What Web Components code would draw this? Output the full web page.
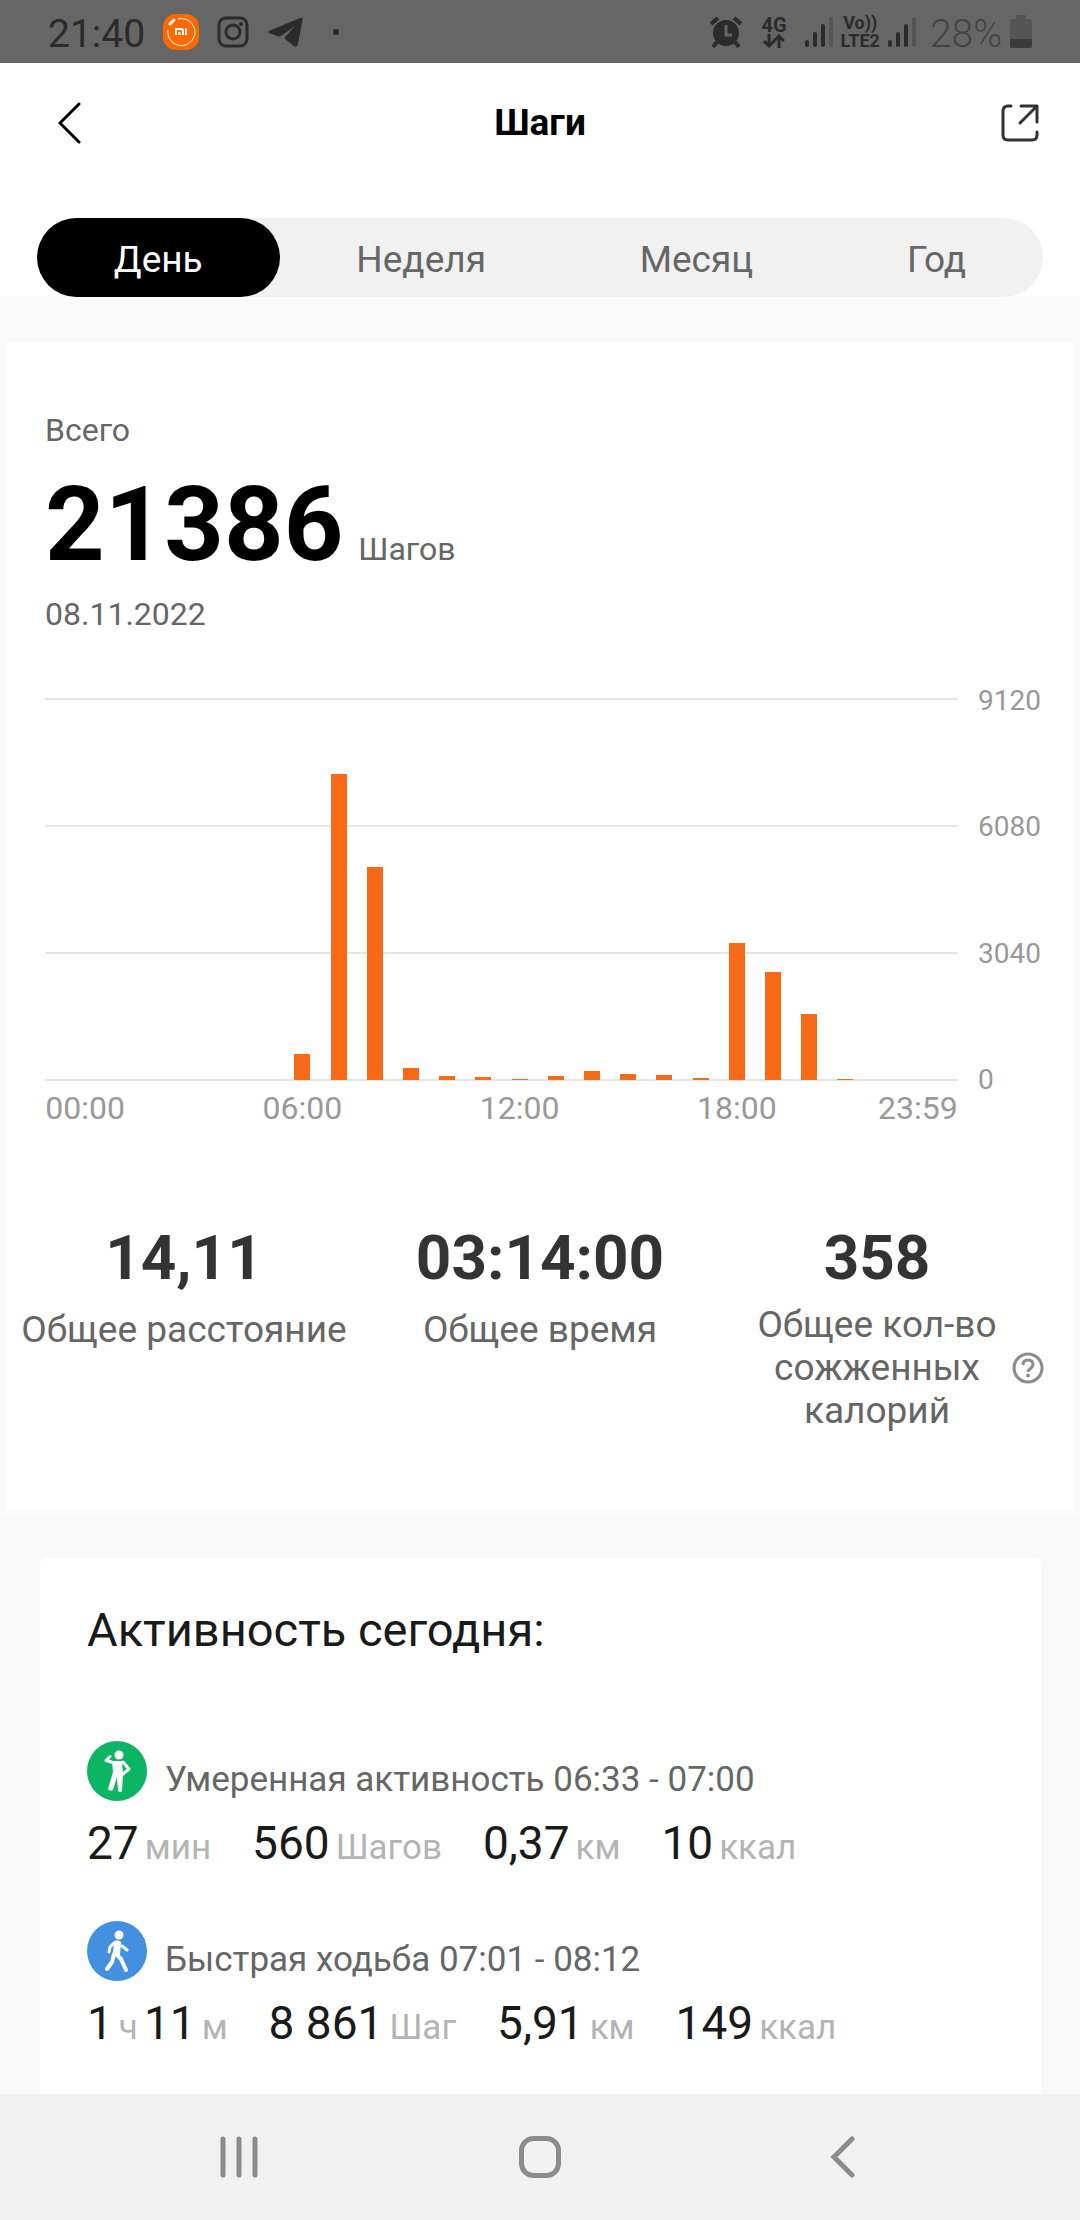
<!DOCTYPE html>
<html lang="ru">
<head>
<meta charset="utf-8">
<meta name="viewport" content="width=device-width, initial-scale=1">
<title>Шаги</title>
<style>
  body {
    margin: 0;
    font-family: Roboto, "Noto Sans", sans-serif;
    background: #f8f8f8;
    color: #666;
  }
</style>
</head>
<body>
<steps-app></steps-app>

<script>
class StatusBar extends HTMLElement {
  constructor () {
    super()
    this.shadow = this.attachShadow({ mode: 'open' })
  }

  connectedCallback () {
    this.render()
  }

  signal () {
    return /* html */`
      <svg width="28" height="32" viewBox="0 0 28 32" stroke-width="4" stroke-linecap="round">
        <path d="M2 26v3M10 18v11M18 10v19" stroke="#2b2b2b"/>
        <path d="M26 3v26" stroke="#555"/>
      </svg>`
  }

  render () {
    this.shadow.innerHTML =
      /* html */`
      <style>
        :host {
          display: flex;
          justify-content: space-between;
          align-items: center;
          height: 63px;
          padding: 0 48px;
          background: #666;
          color: #2b2b2b;
          font-size: 39px;
          line-height: 57px;
        }

        .group {
          display: flex;
          align-items: center;
        }

        .left {
          gap: 18px;
        }

        .right {
          gap: 8px;
        }

        .time {
          padding-top: 6px;
        }

        .dot {
          width: 6px;
          height: 6px;
          margin-left: 12px;
          border-radius: 50%;
          background: #2b2b2b;
        }

        .network {
          display: grid;
          justify-items: center;
          font-size: 18px;
          font-weight: 700;
          line-height: 18px;
        }

        .mobile {
          margin: 0 10px;
          font-size: 20px;
        }

        .battery {
          padding: 6px 0 0 6px;
          color: #444;
          font-weight: 300;
        }

        svg {
          display: block;
        }
      </style>

      <div class="group left">
        <span class="time">21:40</span>
        <svg width="36" height="36" viewBox="0 0 36 36" fill="none">
          <rect width="36" height="36" rx="13" fill="#ff6900"/>
          <path d="M15 5a13.500 13.500 0 1 1-10 11" stroke="#fff" stroke-width="1"/>
          <path d="M7 10l4-4" stroke="#fff" stroke-width="3" stroke-linecap="round"/>
          <path d="M13 21v-6h5q2 0 2 2v4M16.500 21v-3M23 14.500v6.500" stroke="#fff" stroke-width="2"/>
        </svg>
        <svg width="32" height="32" viewBox="0 0 32 32" fill="none" stroke="#2b2b2b" stroke-width="3">
          <rect x="2" y="2" width="28" height="28" rx="7"/>
          <circle cx="16" cy="16" r="7"/>
          <circle cx="24" cy="8" r="2" fill="#2b2b2b" stroke="none"/>
        </svg>
        <svg width="36" height="32" viewBox="0 0 36 32" fill="#2b2b2b">
          <path d="M2 15L33 2q3-1 2.500 2L31 28q-1 4-4 2l-9-7q-1-1 0-2l10-11-14 10q-2 1-4 0l-8-3q-2-1 0-2z"/>
        </svg>
        <span class="dot"></span>
      </div>

      <div class="group right">
        <svg width="34" height="32" viewBox="0 0 34 32" fill="none" stroke="#2b2b2b">
          <circle cx="17" cy="17" r="13" fill="#2b2b2b" stroke="none"/>
          <path d="M2 8l7-6M32 8l-7-6" stroke-width="4"/>
          <path d="M8 26l-4 5M26 26l4 5" stroke-width="4"/>
          <path d="M17 9v10h6" stroke="#666" stroke-width="3"/>
        </svg>
        <span class="network mobile">
          4G
          <svg width="24" height="14" viewBox="0 0 24 14" fill="none" stroke="#2b2b2b" stroke-width="3">
            <path d="M7 0v11M2 7l5 5 5-5M17 14V3M12 7l5-5 5 5"/>
          </svg>
        </span>
        ${this.signal()}
        <span class="network"><span>Vo))</span><span>LTE2</span></span>
        ${this.signal()}
        <span class="battery">28%</span>
        <svg width="22" height="33" viewBox="0 0 22 33" fill="#555">
          <path d="M6 0h10v4h4q2 0 2 2v19H0V6q0-2 2-2h4z"/>
          <path d="M0 24h22v7q0 2-2 2H2q-2 0-2-2z" fill="#3a3a3a"/>
        </svg>
      </div>
      `
  }
}

class PageHeader extends HTMLElement {
  constructor () {
    super()
    this.shadow = this.attachShadow({ mode: 'open' })
  }

  connectedCallback () {
    this.render()
  }

  render () {
    this.shadow.innerHTML =
      /* html */`
      <style>
        :host {
          display: grid;
          grid-template-columns: 80px 1fr 80px;
          align-items: center;
          height: 120px;
          padding: 0 30px;
          background: #fff;
        }

        h1 {
          margin: 0;
          color: #000;
          font-size: 37px;
          font-weight: 700;
          line-height: 44px;
          text-align: center;
        }

        button {
          display: grid;
          place-items: center;
          height: 60px;
          padding: 0;
          border: none;
          background: none;
          cursor: pointer;
        }

        .share {
          justify-self: end;
          width: 60px;
        }
      </style>

      <button type="button" aria-label="Назад">
        <svg width="24" height="42" viewBox="0 0 24 42" fill="none" stroke="#000" stroke-width="3" stroke-linecap="round" stroke-linejoin="round">
          <path d="M21 2L2 21l19 19"/>
        </svg>
      </button>
      <h1><slot></slot></h1>
      <button type="button" class="share" aria-label="Поделиться">
        <svg width="38" height="38" viewBox="0 0 38 38" fill="none" stroke="#333" stroke-width="3" stroke-linecap="round" stroke-linejoin="round">
          <path d="M10 2H7q-5 0-5 5v24q0 5 5 5h24q5 0 5-5v-3"/>
          <path d="M20 2h16v16M35 3L19 19"/>
        </svg>
      </button>
      `
  }
}

class PeriodTabs extends HTMLElement {
  constructor () {
    super()
    this.shadow = this.attachShadow({ mode: 'open' })
    this.periods = ['День', 'Неделя', 'Месяц', 'Год']
  }

  connectedCallback () {
    this.render()
  }

  render () {
    this.shadow.innerHTML =
      /* html */`
      <style>
        :host {
          display: block;
          padding: 35px 37px 0;
          background: linear-gradient(#fff 113px, #fafafa 113px);
        }

        .tabs {
          display: flex;
          border-radius: 40px;
          background: #f1f1f1;
        }

        button {
          flex: 1 1 auto;
          height: 79px;
          padding: 4px 0 0;
          border: none;
          border-radius: 40px;
          background: none;
          color: #666;
          font: 37px/44px Roboto, "Noto Sans", sans-serif;
          cursor: pointer;
        }

        button[aria-selected="true"] {
          background: #000;
          color: #fff;
        }
      </style>

      <div class="tabs" role="tablist">
        ${this.periods.map((period, i) => /* html */`
          <button type="button" role="tab" aria-selected="${i === 0}">${period}</button>
        `).join('')}
      </div>
      `
  }
}

class StepsTotal extends HTMLElement {
  constructor () {
    super()
    this.shadow = this.attachShadow({ mode: 'open' })
  }

  connectedCallback () {
    this.render()
  }

  render () {
    this.shadow.innerHTML =
      /* html */`
      <style>
        :host {
          display: block;
          padding: 0 39px;
          font-size: 32px;
          line-height: 40px;
        }

        p {
          margin: 0;
        }

        .total {
          display: flex;
          align-items: baseline;
          gap: 15px;
          padding: 15px 0 9px;
        }

        strong {
          color: #000;
          font-size: 104px;
          line-height: 120px;
        }
      </style>

      <p>Всего</p>
      <p class="total"><strong>${this.getAttribute('value')}</strong> Шагов</p>
      <p>${this.getAttribute('date')}</p>
      `
  }
}

class StepsChart extends HTMLElement {
  constructor () {
    super()
    this.shadow = this.attachShadow({ mode: 'open' })
    this.max = 9120
    this.ticks = [9120, 6080, 3040, 0]
    // steps for every hour of the day
    this.hours = [
      0, 0, 0, 0, 0, 0, 620, 7320, 5100, 280, 90, 60,
      30, 90, 210, 140, 110, 50, 3290, 2580, 1590, 15, 0, 0
    ]
    this.labels = { 0: '00:00', 6: '06:00', 12: '12:00', 18: '18:00', 23: '23:59' }
  }

  connectedCallback () {
    this.render()
  }

  render () {
    this.shadow.innerHTML =
      /* html */`
      <style>
        :host {
          display: block;
          padding: 0 32px 0 39px;
          color: #999;
        }

        .row {
          display: grid;
          grid-template-columns: 1fr 64px;
          column-gap: 20px;
        }

        .plot {
          display: grid;
          height: 383px;
          background: repeating-linear-gradient(#e6e6e6 0 2px, transparent 2px 127px);
        }

        .bars, .hours {
          display: grid;
          grid-template-columns: repeat(24, minmax(0, 1fr));
          justify-items: center;
          padding: 0 22px;
        }

        .bars {
          align-items: end;
          height: 381px;
          padding-top: 1px;
        }

        .bars span {
          width: 16px;
          background: #f96a16;
        }

        .scale {
          display: flex;
          flex-direction: column;
          justify-content: space-between;
          margin: -15px 0 -17px;
          font-size: 28px;
          line-height: 36px;
        }

        .hours {
          padding-top: 7px;
          font-size: 32px;
          line-height: 40px;
        }
      </style>

      <div class="row">
        <div class="plot">
          <div class="bars">
            ${this.hours.map(steps => /* html */`<span style="height: ${Math.round(steps / this.max * 381)}px"></span>`).join('')}
          </div>
        </div>
        <div class="scale">
          ${this.ticks.map(tick => /* html */`<span>${tick}</span>`).join('')}
        </div>
        <div class="hours">
          ${Object.entries(this.labels).map(([hour, label]) => /* html */`<span style="grid-column: ${Number(hour) + 1}">${label}</span>`).join('')}
        </div>
      </div>
      `
  }
}

class StatItem extends HTMLElement {
  constructor () {
    super()
    this.shadow = this.attachShadow({ mode: 'open' })
  }

  connectedCallback () {
    this.render()
  }

  render () {
    this.shadow.innerHTML =
      /* html */`
      <style>
        :host {
          display: grid;
          grid-template-columns: 1fr auto;
          row-gap: 7px;
          align-content: start;
          align-items: center;
          text-align: center;
        }

        :host([help]) {
          padding: 0 30px 0 24px;
        }

        strong {
          color: #333;
          font-size: 62px;
          line-height: 76px;
        }

        .label {
          display: grid;
          grid-column: 1;
          align-items: center;
          min-height: 52px;
          font-size: 37px;
          line-height: 43px;
        }

        button {
          display: block;
          padding: 0;
          border: none;
          background: none;
          cursor: pointer;
        }

        svg {
          display: block;
        }
      </style>

      <strong>${this.getAttribute('value')}</strong>
      <span class="label"><slot></slot></span>
      ${this.hasAttribute('help') ? /* html */`
        <button type="button" aria-label="Справка">
          <svg width="32" height="32" viewBox="0 0 32 32" fill="none" stroke="#8c8c8c" stroke-width="3">
            <circle cx="16" cy="16" r="14"/>
            <path d="M11 13q0-5 5-5t5 4.500q0 2-2.500 4T16 20"/>
            <circle cx="16" cy="23.500" r="2" fill="#8c8c8c" stroke="none"/>
          </svg>
        </button>` : ''}
      `
  }
}

class ActivityItem extends HTMLElement {
  constructor () {
    super()
    this.shadow = this.attachShadow({ mode: 'open' })
    this.icons = {
      moderate: /* html */`
        <circle cx="30" cy="30" r="30" fill="#0bb563"/>
        <circle cx="32" cy="14" r="4.500" fill="#fff"/>
        <path d="M25 20h10l1 13-1 17q-2 2-4 0l-1-14-4 13q-3 2-5-1l5-17z" fill="#fff"/>
        <path d="M36 21l6 7-6 5M26 21.500l-7-2 4-4" stroke="#fff" stroke-width="3" stroke-linecap="round" stroke-linejoin="round"/>`,
      walk: /* html */`
        <circle cx="30" cy="30" r="30" fill="#4290df"/>
        <circle cx="32" cy="14" r="4.500" fill="#fff"/>
        <path d="M27 20q4-2 7 1l-1 13-7-2z" fill="#fff"/>
        <path d="M27 22l-4 4-1 5M35 25l5 4" stroke="#fff" stroke-width="3" stroke-linecap="round"/>
        <path d="M28 32l6 6 5 11M27 33l-2 8-5 7" stroke="#fff" stroke-width="4" stroke-linecap="round" stroke-linejoin="round"/>`
    }
  }

  connectedCallback () {
    this.render()
  }

  // "27 мин|560 Шагов" -> groups, "_" is a space inside a number, "+" joins two pairs
  metrics () {
    return this.getAttribute('metrics').split('|').map(group => {
      const pairs = group.split('+').map(pair => {
        const [value, unit] = pair.split(' ')
        return /* html */`<b>${value.replace('_', ' ')}</b><small>${unit}</small>`
      })
      return /* html */`<li>${pairs.join('')}</li>`
    }).join('')
  }

  render () {
    this.shadow.innerHTML =
      /* html */`
      <style>
        :host {
          display: block;
          font-size: 35px;
        }

        .name {
          display: flex;
          align-items: center;
          gap: 18px;
          line-height: 42px;
        }

        .name span {
          padding-top: 18px;
        }

        ul {
          display: flex;
          gap: 41px;
          margin: 0;
          padding: 12px 0 0;
          list-style: none;
          line-height: 60px;
        }

        li {
          display: flex;
          align-items: baseline;
          gap: 6px;
        }

        b {
          color: #1a1a1a;
          font-size: 46px;
          font-weight: 400;
        }

        small {
          color: #b4b4b4;
          font-size: 35px;
        }
      </style>

      <div class="name">
        <svg width="60" height="60" viewBox="0 0 60 60" fill="none">${this.icons[this.getAttribute('icon')]}</svg>
        <span><slot></slot></span>
      </div>
      <ul>${this.metrics()}</ul>
      `
  }
}

class SystemNav extends HTMLElement {
  constructor () {
    super()
    this.shadow = this.attachShadow({ mode: 'open' })
  }

  connectedCallback () {
    this.render()
  }

  render () {
    this.shadow.innerHTML =
      /* html */`
      <style>
        :host {
          display: flex;
          height: 126px;
          padding: 0 88px;
          background: #f1f1f1;
        }

        button {
          display: grid;
          flex: 1;
          place-items: center;
          padding: 0;
          border: none;
          background: none;
          cursor: pointer;
        }

        svg {
          fill: none;
          stroke: #8c8c8c;
          stroke-width: 5;
          stroke-linecap: round;
        }
      </style>

      <button type="button" aria-label="Недавние">
        <svg width="42" height="42" viewBox="0 0 42 42"><path d="M5 3v36M21 3v36M37 3v36"/></svg>
      </button>
      <button type="button" aria-label="Домой">
        <svg width="42" height="42" viewBox="0 0 42 42"><rect x="2.500" y="2.500" width="37" height="37" rx="12"/></svg>
      </button>
      <button type="button" aria-label="Назад">
        <svg width="42" height="42" viewBox="0 0 42 42"><path d="M32 3L14 21l18 18"/></svg>
      </button>
      `
  }
}

class StepsApp extends HTMLElement {
  constructor () {
    super()
    this.shadow = this.attachShadow({ mode: 'open' })
  }

  connectedCallback () {
    this.render()
  }

  render () {
    this.shadow.innerHTML =
      /* html */`
      <style>
        :host {
          display: flex;
          flex-direction: column;
          min-height: 100vh;
        }

        main {
          display: flex;
          flex: 1;
          flex-direction: column;
        }

        .summary {
          padding: 44px 6px 8px;
          background: #fafafa;
        }

        .card {
          border-radius: 6px;
          background: #fff;
        }

        .summary .card {
          padding: 69px 0 79px;
        }

        steps-chart {
          padding-top: 64px;
        }

        .stats {
          display: grid;
          grid-template-columns: repeat(3, 1fr);
          padding-top: 92px;
        }

        .activity {
          display: flex;
          flex: 1;
          flex-direction: column;
          gap: 43px;
          margin: 39px 39px 0 40px;
          padding: 44px 47px 20px;
          border-radius: 6px 6px 0 0;
        }

        h2 {
          margin: 0 0 40px;
          color: #1a1a1a;
          font-size: 47px;
          font-weight: 400;
          line-height: 56px;
        }
      </style>

      <status-bar></status-bar>
      <page-header>Шаги</page-header>
      <period-tabs></period-tabs>
      <main>
        <section class="summary">
          <div class="card">
            <steps-total value="21386" date="08.11.2022"></steps-total>
            <steps-chart></steps-chart>
            <div class="stats">
              <stat-item value="14,11">Общее расстояние</stat-item>
              <stat-item value="03:14:00">Общее время</stat-item>
              <stat-item value="358" help>Общее кол-во сожженных калорий</stat-item>
            </div>
          </div>
        </section>
        <section class="card activity">
          <h2>Активность сегодня:</h2>
          <activity-item icon="moderate" metrics="27 мин|560 Шагов|0,37 км|10 ккал">Умеренная активность 06:33 - 07:00</activity-item>
          <activity-item icon="walk" metrics="1 ч+11 м|8_861 Шаг|5,91 км|149 ккал">Быстрая ходьба 07:01 - 08:12</activity-item>
        </section>
      </main>
      <system-nav></system-nav>
      `
  }
}

customElements.define('status-bar', StatusBar)
customElements.define('page-header', PageHeader)
customElements.define('period-tabs', PeriodTabs)
customElements.define('steps-total', StepsTotal)
customElements.define('steps-chart', StepsChart)
customElements.define('stat-item', StatItem)
customElements.define('activity-item', ActivityItem)
customElements.define('system-nav', SystemNav)
customElements.define('steps-app', StepsApp)
</script>
</body>
</html>
